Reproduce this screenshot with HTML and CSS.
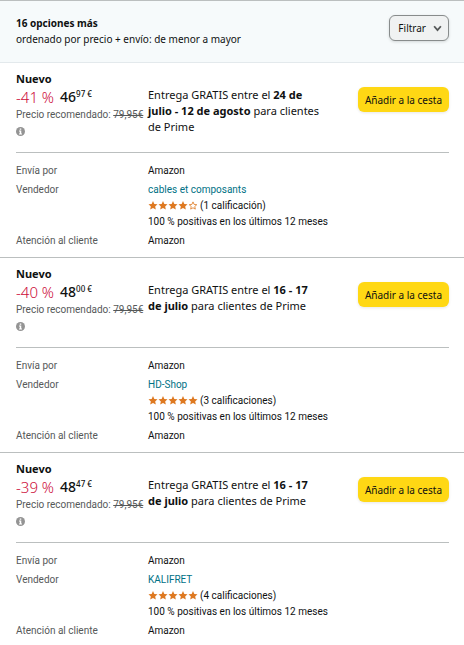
FILE: index.html
```
<!DOCTYPE html>
<html lang="es">
<head>
<meta charset="UTF-8">
<meta name="viewport" content="width=device-width, initial-scale=1.0">
<title>Opciones de compra</title>
<link rel="stylesheet" href="styles.css">
</head>
<body>

    <svg class="sprite" aria-hidden="true">
        <symbol id="star" viewBox="0 0 20 20">
            <path d="M10 0l3 6.500 7 .8-5.200 4.700 1.500 7L10 15.500 3.700 19l1.500-7L0 7.300l7-.8z" fill="#de7921"/>
        </symbol>
        <symbol id="star-empty" viewBox="0 0 20 20">
            <path d="M10 2l2.400 5.600 6 .6-4.500 4 1.300 5.800L10 15l-5.200 3 1.300-5.800-4.500-4 6-.6z" fill="#fff" stroke="#de7921" stroke-width="1.800"/>
        </symbol>
        <symbol id="info" viewBox="0 0 18 18">
            <circle cx="9" cy="9" r="9" fill="#949494"/>
            <path d="M7.500 3h3v2.600h-3zM6 7.200h4.500V13H12v1.800H6V13h1.500V9H6z" fill="#fff"/>
        </symbol>
    </svg>

    <header class="list-header">
        <div class="list-title">
            <h1>16 opciones más</h1>
            <p>ordenado por precio + envío: de menor a mayor</p>
        </div>
        <button type="button" class="filter-button">Filtrar
            <svg class="chevron" viewBox="0 0 8 6"><path d="M1 1l3 3.500L7 1" fill="none" stroke="#565959" stroke-width="1.600"/></svg>
        </button>
    </header>

    <main>
        <section class="offer">
            <div class="offer-top">
                <div class="offer-price">
                    <h2>Nuevo</h2>
                    <div class="price"><span class="discount">-41 %</span> <span class="amount">46<sup>97 €</sup></span></div>
                    <div class="list-price">Precio recomendado: <s>79,95€</s></div>
                    <svg class="info-icon" role="img" aria-label="Información"><use href="#info"/></svg>
                </div>
                <p class="delivery">Entrega GRATIS entre el <b>24 de julio - 12 de agosto</b> para clientes de Prime</p>
                <button type="button" class="cart-button">Añadir a la cesta</button>
            </div>
            <dl class="seller">
                <dt>Envía por</dt>
                <dd>Amazon</dd>
                <dt>Vendedor</dt>
                <dd>
                    <a href="#">cables et composants</a>
                    <div class="rating">
                        <span class="stars">
                            <svg><use href="#star"/></svg><svg><use href="#star"/></svg><svg><use href="#star"/></svg><svg><use href="#star"/></svg><svg><use href="#star-empty"/></svg>
                        </span>
                        (1 calificación)
                    </div>
                    <div>100 % positivas en los últimos 12 meses</div>
                </dd>
                <dt>Atención al cliente</dt>
                <dd>Amazon</dd>
            </dl>
        </section>

        <section class="offer">
            <div class="offer-top">
                <div class="offer-price">
                    <h2>Nuevo</h2>
                    <div class="price"><span class="discount">-40 %</span> <span class="amount">48<sup>00 €</sup></span></div>
                    <div class="list-price">Precio recomendado: <s>79,95€</s></div>
                    <svg class="info-icon" role="img" aria-label="Información"><use href="#info"/></svg>
                </div>
                <p class="delivery">Entrega GRATIS entre el <b>16 - 17 de julio</b> para clientes de Prime</p>
                <button type="button" class="cart-button">Añadir a la cesta</button>
            </div>
            <dl class="seller">
                <dt>Envía por</dt>
                <dd>Amazon</dd>
                <dt>Vendedor</dt>
                <dd>
                    <a href="#">HD-Shop</a>
                    <div class="rating">
                        <span class="stars">
                            <svg><use href="#star"/></svg><svg><use href="#star"/></svg><svg><use href="#star"/></svg><svg><use href="#star"/></svg><svg><use href="#star"/></svg>
                        </span>
                        (3 calificaciones)
                    </div>
                    <div>100 % positivas en los últimos 12 meses</div>
                </dd>
                <dt>Atención al cliente</dt>
                <dd>Amazon</dd>
            </dl>
        </section>

        <section class="offer">
            <div class="offer-top">
                <div class="offer-price">
                    <h2>Nuevo</h2>
                    <div class="price"><span class="discount">-39 %</span> <span class="amount">48<sup>47 €</sup></span></div>
                    <div class="list-price">Precio recomendado: <s>79,95€</s></div>
                    <svg class="info-icon" role="img" aria-label="Información"><use href="#info"/></svg>
                </div>
                <p class="delivery">Entrega GRATIS entre el <b>16 - 17 de julio</b> para clientes de Prime</p>
                <button type="button" class="cart-button">Añadir a la cesta</button>
            </div>
            <dl class="seller">
                <dt>Envía por</dt>
                <dd>Amazon</dd>
                <dt>Vendedor</dt>
                <dd>
                    <a href="#">KALIFRET</a>
                    <div class="rating">
                        <span class="stars">
                            <svg><use href="#star"/></svg><svg><use href="#star"/></svg><svg><use href="#star"/></svg><svg><use href="#star"/></svg><svg><use href="#star"/></svg>
                        </span>
                        (4 calificaciones)
                    </div>
                    <div>100 % positivas en los últimos 12 meses</div>
                </dd>
                <dt>Atención al cliente</dt>
                <dd>Amazon</dd>
            </dl>
        </section>
    </main>

</body>
</html>
```
FILE: styles.css
```
body {
    margin: 0;
    font-family: "Noto Sans", sans-serif;
    font-size: 10px;
    line-height: 16px;
    color: #0f1111;
    background-color: #fff;
}

h1, h2, p, dl, dd {
    margin: 0;
}

h1, h2 {
    font-size: 11px;
    font-weight: bold;
}

h1 {
    font-size: 10px;
}

button {
    font-family: inherit;
    font-size: 10px;
    color: #0f1111;
    cursor: pointer;
}

.sprite {
    display: none;
}

.list-header {
    display: flex;
    justify-content: space-between;
    align-items: flex-start;
    padding: 14px 15px 14px 16px;
    background-color: #f6fafb;
    border-top: 1px solid #bbbfbf;
    border-bottom: 1px solid #e3e9ec;
}

.list-title {
    padding-bottom: 1px;
}

.filter-button {
    display: flex;
    align-items: center;
    gap: 7px;
    height: 26px;
    padding: 0 6px 0 8px;
    background-color: #f0f2f2;
    border: 1px solid #888c8c;
    border-radius: 6px;
    box-shadow: 0 1px 3px rgba(15,17,17,0.15);
}

.chevron {
    width: 9px;
    height: 7px;
}

.offer {
    border-bottom: 1px solid #bbbfbf;
}

.offer:last-child {
    border-bottom: none;
}

.offer-top {
    display: grid;
    grid-template-columns: 132px 1fr auto;
    align-items: start;
    margin: 0 15px 0 16px;
    padding: 8px 0 13px;
    border-bottom: 1px solid #bbbfbf;
}

.price {
    display: flex;
    gap: 6px;
    line-height: 20px;
    font-size: 15px;
    white-space: nowrap;
}

.discount {
    color: #cc0c39;
    font-weight: 300;
}

.amount {
    font-size: 14px;
    font-weight: 500;
}

.amount sup {
    font-size: 8px;
    line-height: 1;
    vertical-align: 5px;
}

.list-price {
    font-family: Roboto, sans-serif;
    color: #565959;
    white-space: nowrap;
}

.info-icon {
    display: block;
    width: 9px;
    height: 9px;
    padding: 4px 0 3px;
}

.delivery {
    max-width: 176px;
    margin-top: 16px;
    font-size: 11px;
}

.cart-button {
    height: 25px;
    margin-top: 16px;
    padding: 0 7px;
    background-color: #ffd814;
    border: none;
    border-radius: 6px;
    box-shadow: 0 1px 3px rgba(15,17,17,0.1);
}

.seller {
    display: grid;
    grid-template-columns: 132px 1fr;
    row-gap: 3px;
    padding: 10px 16px 8px;
    font-family: Roboto, sans-serif;
}

.seller dt {
    color: #565959;
}

.seller a {
    color: #007185;
    text-decoration: none;
}

.rating {
    display: flex;
    align-items: center;
    gap: 2px;
}

.stars {
    display: flex;
    padding-bottom: 2px;
}

.stars svg {
    width: 10px;
    height: 9px;
}
```
